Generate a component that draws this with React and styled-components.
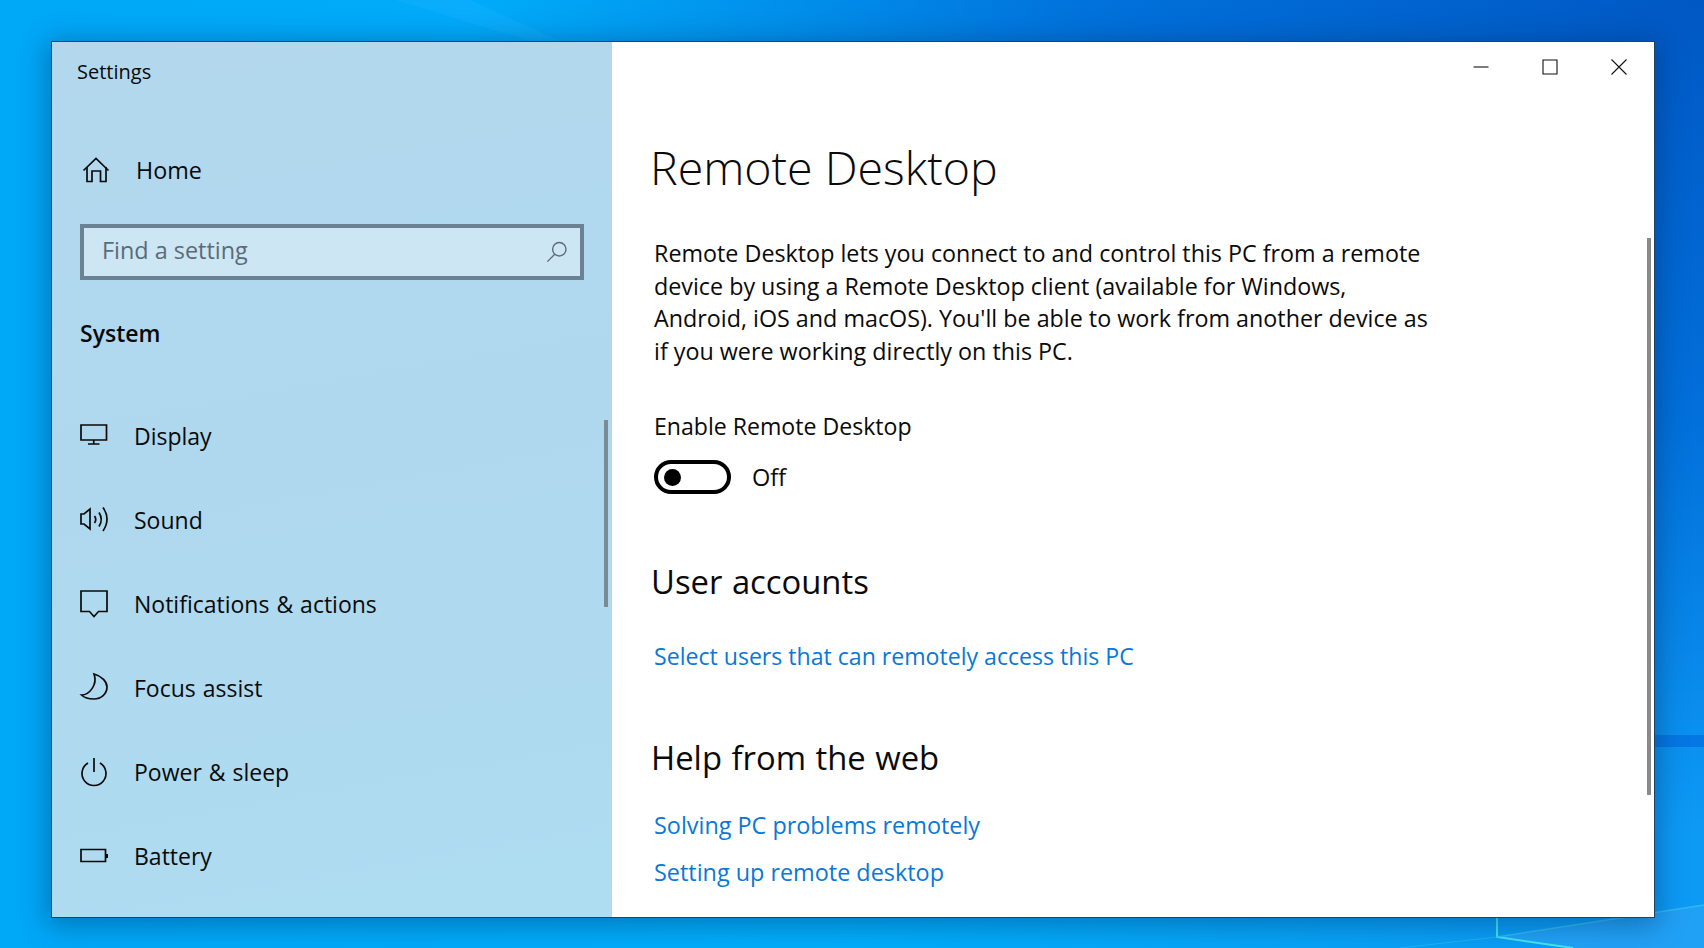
import React from "react";
import styled, { createGlobalStyle } from "styled-components";

const FONT = `"Open Sans", "Noto Sans", "Liberation Sans", sans-serif`;

const GlobalStyle = createGlobalStyle`
  html, body {
    margin: 0;
    padding: 0;
    height: 100%;
    overflow: hidden;
  }
  * {
    box-sizing: border-box;
  }
`;

const SIDEBAR_ITEMS = [
  { label: "Display", icon: "display" },
  { label: "Sound", icon: "sound" },
  { label: "Notifications & actions", icon: "notifications" },
  { label: "Focus assist", icon: "focus" },
  { label: "Power & sleep", icon: "power" },
  { label: "Battery", icon: "battery" },
];

const ICON_PATHS = {
  home: (
    <>
      <path d="M1.500 14.500 14 2.500l12.500 12" />
      <path d="M5 11V25.500h5V15h8.500v10.500h5.500V11" />
    </>
  ),
  display: (
    <>
      <path d="M1 3H26.500V18H1Z" />
      <path d="M13.750 18V22M8 22H19.500" />
    </>
  ),
  sound: (
    <>
      <path d="M1 8H4L10 3V23L4 18H1Z" />
      <path d="M14.500 10Q17 13.500 14.500 17" />
      <path d="M19 6.500Q23.500 13.500 19 20.500" />
      <path d="M23 1.500Q31 13 23 25" />
    </>
  ),
  notifications: (
    <path d="M1 1H27V21.500H18.500L14 26.500L9.500 21.500H1Z" />
  ),
  focus: (
    <path d="M14 0C22 2 27 8 27 13C27 20 21 25 14 25C9 25 4.500 24 1.500 21C9 21 18 11 14 0Z" />
  ),
  power: (
    <>
      <path d="M14 0V14" />
      <path d="M8 5.100A12 12 0 1 0 20 5.100" />
    </>
  ),
  battery: (
    <>
      <path d="M1 7.500H25.500V19.500H1Z" />
      <path d="M27 12V16" strokeWidth="2" />
    </>
  ),
};

const Icon = ({ name }) => (
  <NavIcon viewBox="0 0 28 28" aria-hidden="true">
    {ICON_PATHS[name]}
  </NavIcon>
);

export default function App() {
  return (
    <>
      <GlobalStyle />
      <Desktop>
        <Wallpaper viewBox="0 0 1704 948" preserveAspectRatio="none" aria-hidden="true">
          <polygon points="395,0 470,0 560,41 530,41" fill="#1ab2ff" opacity="0.35" />
          <polygon points="1497,937 1704,905 1704,948 1572,948" fill="#2ba4f6" opacity="0.7" />
          <polygon points="1654,735 1704,735 1704,747 1654,747" fill="#0577e4" />
          <path d="M1497 917V937L1573 948" stroke="#45e6ee" strokeWidth="2" fill="none" />
          <path d="M1497 937 1704 905" stroke="#39c8f2" strokeWidth="1.500" fill="none" opacity="0.7" />
          <path d="M1400 948 1497 937" stroke="#30c8f5" strokeWidth="1" fill="none" opacity="0.5" />
        </Wallpaper>
        <Window>
          <Sidebar>
            <AppTitle>Settings</AppTitle>
            <HomeRow>
              <Icon name="home" />
              <HomeLabel>Home</HomeLabel>
            </HomeRow>
            <SearchBox>
              <SearchText>Find a setting</SearchText>
              <SearchIcon viewBox="0 0 24 24" aria-hidden="true">
                <circle cx="14.500" cy="9" r="7.300" />
                <path d="M9.500 14.500 1.500 22.500" />
              </SearchIcon>
            </SearchBox>
            <SectionLabel>System</SectionLabel>
            <NavList>
              {SIDEBAR_ITEMS.map((item) => (
                <NavItem key={item.label}>
                  <Icon name={item.icon} />
                  <NavLabel>{item.label}</NavLabel>
                </NavItem>
              ))}
            </NavList>
            <SidebarScrollbar />
          </Sidebar>
          <Main>
            <TitleBar>
              <ControlButton>
                <ControlIcon viewBox="0 0 16 16"><path d="M0.500 8h15" /></ControlIcon>
              </ControlButton>
              <ControlButton>
                <ControlIcon viewBox="0 0 16 16"><path d="M1 1h14v14H1z" /></ControlIcon>
              </ControlButton>
              <ControlButton>
                <ControlIcon viewBox="0 0 16 16"><path d="M0.500 0.500l15 15M15.500 0.500l-15 15" /></ControlIcon>
              </ControlButton>
            </TitleBar>
            <Content>
              <PageTitle>Remote Desktop</PageTitle>
              <Description>
                Remote Desktop lets you connect to and control this PC from a remote
                <br />
                device by using a Remote Desktop client (available for Windows,
                <br />
                Android, iOS and macOS). You'll be able to work from another device as
                <br />
                if you were working directly on this PC.
              </Description>
              <FieldLabel>Enable Remote Desktop</FieldLabel>
              <ToggleRow>
                <Toggle>
                  <Knob />
                </Toggle>
                <ToggleText>Off</ToggleText>
              </ToggleRow>
              <SubHeading $top={66}>User accounts</SubHeading>
              <LinkText $top={36} $size={23.1}>Select users that can remotely access this PC</LinkText>
              <SubHeading $top={64}>Help from the web</SubHeading>
              <LinkText $top={29} $size={23.4}>Solving PC problems remotely</LinkText>
              <LinkText $top={15} $size={23.4}>Setting up remote desktop</LinkText>
            </Content>
            <MainScrollbar />
          </Main>
        </Window>
      </Desktop>
    </>
  );
}

//STYLED-COMPONENTS
const Desktop = styled.div`
  position: relative;
  width: 1704px;
  height: 948px;
  padding: 41px 0 0 51px;
  font-family: ${FONT};
  overflow: hidden;
  background:
    radial-gradient(90% 110% at 100% 0%, #0058c4 0%, rgba(0, 104, 214, 0.85) 40%, rgba(0, 140, 240, 0) 80%),
    linear-gradient(to right, #00a8f8 0%, #00aefb 50%, #0d9af5 100%);
`;

const Wallpaper = styled.svg`
  position: absolute;
  inset: 0;
  width: 100%;
  height: 100%;
`;

const Window = styled.div`
  position: relative;
  display: flex;
  width: 1604px;
  height: 877px;
  border: 1px solid #1c4560;
  background: white;
  box-shadow: 0 4px 26px 4px rgba(0, 40, 90, 0.38);
`;

const Sidebar = styled.div`
  position: relative;
  flex: 0 0 560px;
  padding: 0 0 0 28px;
  background: linear-gradient(170deg, #b3d8ee 0%, #afd8ee 45%, #aedcf1 100%);
`;

const AppTitle = styled.div`
  margin: 15px 0 0 -3px;
  font-size: 20px;
  line-height: 30px;
  color: #0a0a0a;
`;

const HomeRow = styled.div`
  display: flex;
  align-items: center;
  height: 40px;
  margin-top: 63px;
  padding-left: 2px;
`;

const NavIcon = styled.svg`
  flex: 0 0 28px;
  width: 28px;
  height: 28px;
  fill: none;
  stroke: #0a0a0a;
  stroke-width: 1.700;
  overflow: visible;
`;

const HomeLabel = styled.span`
  margin-left: 26px;
  font-size: 23.300px;
  color: #0a0a0a;
`;

const SearchBox = styled.div`
  display: flex;
  align-items: center;
  justify-content: space-between;
  width: 504px;
  height: 56px;
  margin-top: 34px;
  padding: 0 12px 0 18px;
  border: 4px solid #6b8294;
  background: #cde6f4;
`;

const SearchText = styled.span`
  margin-top: -4px;
  font-size: 23.400px;
  color: #5a6b78;
`;

const SearchIcon = styled.svg`
  width: 22px;
  height: 22px;
  fill: none;
  stroke: #5a6b78;
  stroke-width: 1.500;
`;

const SectionLabel = styled.div`
  margin-top: 35px;
  font-size: 23px;
  line-height: 36px;
  font-weight: 600;
  color: #0a0a0a;
`;

const NavList = styled.div`
  display: flex;
  flex-direction: column;
  margin-top: 43px;
`;

const NavItem = styled.div`
  display: flex;
  align-items: center;
  height: 84px;
`;

const NavLabel = styled.span`
  margin-left: 26px;
  font-size: 23px;
  word-spacing: 1px;
  color: #0a0a0a;
`;

const SidebarScrollbar = styled.div`
  position: absolute;
  top: 378px;
  right: 4px;
  width: 4px;
  height: 187px;
  background: #7c8a95;
`;

const Main = styled.div`
  position: relative;
  flex: 1;
  min-width: 0;
`;

const TitleBar = styled.div`
  display: flex;
  justify-content: flex-end;
  height: 50px;
  padding-right: 1px;
`;

const ControlButton = styled.div`
  display: flex;
  align-items: center;
  justify-content: center;
  width: 69px;
  height: 50px;
`;

const ControlIcon = styled.svg`
  width: 16px;
  height: 16px;
  fill: none;
  stroke: #111;
  stroke-width: 1.100;
`;

const Content = styled.div`
  display: flex;
  flex-direction: column;
  align-items: flex-start;
  padding-left: 42px;
`;

const PageTitle = styled.h1`
  margin: 43px 0 0 -4px;
  font-size: 46.500px;
  line-height: 64px;
  font-weight: 300;
  color: #0a0a0a;
`;

const Description = styled.p`
  margin: 38px 0 0;
  font-size: 23.300px;
  line-height: 32.600px;
  color: #0a0a0a;
  white-space: nowrap;
`;

const FieldLabel = styled.div`
  margin-top: 43px;
  font-size: 23.100px;
  line-height: 32px;
  color: #0a0a0a;
`;

const ToggleRow = styled.div`
  display: flex;
  align-items: center;
  margin-top: 18px;
`;

const Toggle = styled.div`
  display: flex;
  align-items: center;
  width: 77px;
  height: 34px;
  padding-left: 6px;
  border: 4px solid #000;
  border-radius: 17px;
`;

const Knob = styled.div`
  width: 17px;
  height: 17px;
  border-radius: 50%;
  background: #000;
`;

const ToggleText = styled.span`
  margin-left: 21px;
  font-size: 23.500px;
  color: #0a0a0a;
`;

const SubHeading = styled.h2`
  margin: ${(props) => props.$top}px 0 0 -3px;
  font-size: 32.800px;
  line-height: 44px;
  font-weight: 400;
  word-spacing: 1px;
  color: #0a0a0a;
`;

const LinkText = styled.a`
  display: block;
  margin-top: ${(props) => props.$top}px;
  font-size: ${(props) => props.$size}px;
  line-height: 32px;
  color: #0a78d7;
`;

const MainScrollbar = styled.div`
  position: absolute;
  top: 196px;
  right: 3px;
  width: 4px;
  height: 557px;
  background: #8a8a8a;
`;
